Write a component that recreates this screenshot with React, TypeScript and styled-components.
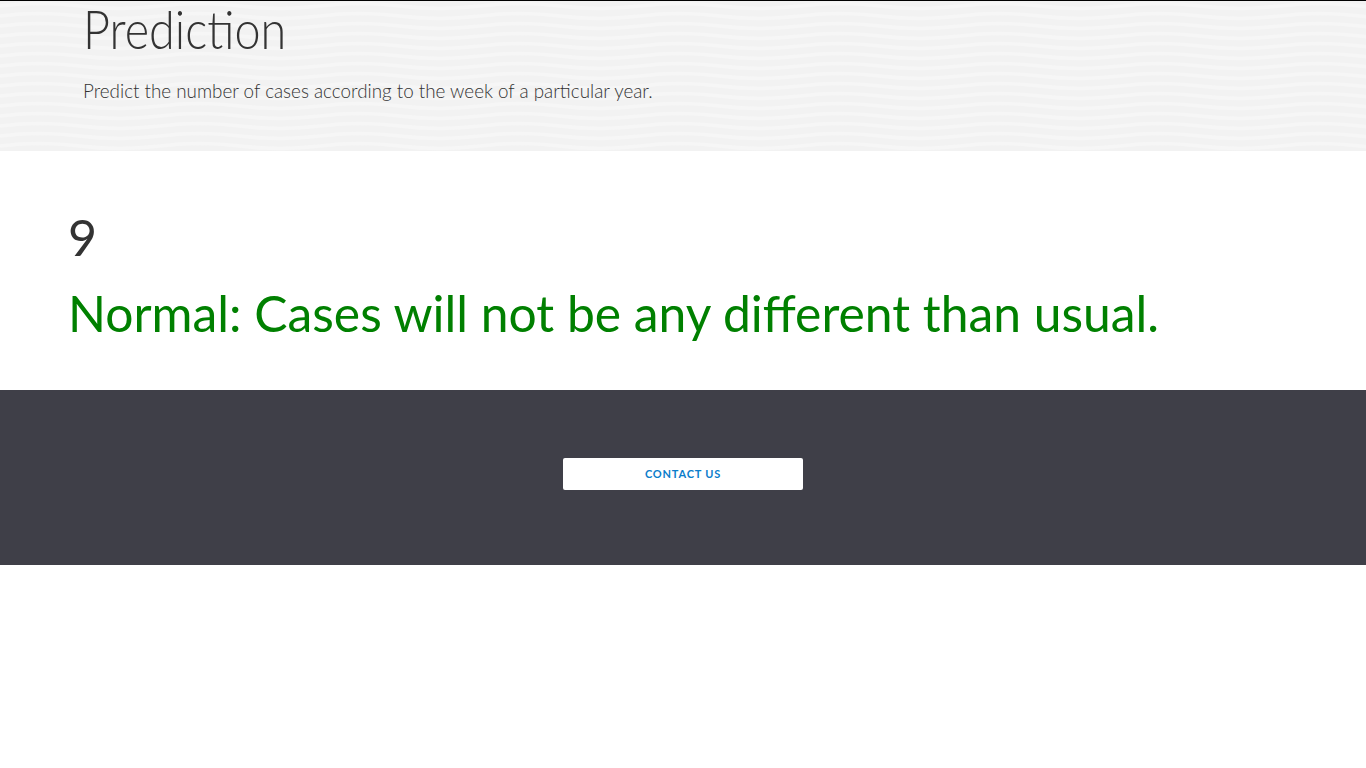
import React from "react";
import styled, { createGlobalStyle } from "styled-components";

const Global = createGlobalStyle`
  html, body { margin: 0; padding: 0; background: #fff; }
  body { font-family: Lato, "Liberation Sans", sans-serif; }
  * { box-sizing: border-box; }
`;

const wave = encodeURIComponent(
  `<svg xmlns='http://www.w3.org/2000/svg' width='160' height='10' viewBox='0 0 160 10'><path d='M0 5 Q40 0 80 5 T160 5' fill='none' stroke='#f9f9f9' stroke-width='3.5' stroke-opacity='0.7'/></svg>`
);

const Page = styled.div`
  display: flex;
  flex-direction: column;
  border-top: 1px solid #000;
`;

const Header = styled.header`
  height: 150px;
  background-color: #f2f2f2;
  background-image: url("data:image/svg+xml,${wave}");
  background-repeat: repeat;
  padding: 0 0 0 83px;
  display: flex;
  flex-direction: column;
`;

const Title = styled.h1`
  margin: 0;
  font-family: Lato, sans-serif;
  font-weight: 300;
  font-size: 53px;
  line-height: 56px;
  color: #333;
  transform: scaleX(0.882);
  transform-origin: left center;
  white-space: nowrap;
`;

const Subtitle = styled.p`
  margin: 22px 0 0;
  font-family: Lato, sans-serif;
  font-weight: 300;
  font-size: 19px;
  line-height: 24px;
  color: #333;
  transform: scaleX(0.99);
  transform-origin: left center;
  white-space: nowrap;
`;

const Main = styled.main`
  height: 239px;
  padding: 56px 0 0 68px;
  display: flex;
  flex-direction: column;
`;

const Number = styled.div`
  font-family: Lato, sans-serif;
  font-size: 50px;
  line-height: 60px;
  color: #333;
`;

const Verdict = styled.div`
  margin-top: 16px;
  font-family: Lato, sans-serif;
  font-size: 49.8px;
  line-height: 60px;
  color: #008000;
  white-space: nowrap;
`;

const Footer = styled.footer`
  height: 175px;
  background: #3f3f48;
  display: flex;
  justify-content: center;
  padding: 68px 0 0 0;
`;

const ContactButton = styled.a`
  width: 240px;
  height: 32px;
  background: #fff;
  border-radius: 2px;
  display: flex;
  align-items: center;
  justify-content: center;
  padding-bottom: 1px;
  font-family: Lato, sans-serif;
  font-weight: 700;
  font-size: 11px;
  letter-spacing: 0.8px;
  color: #0b7dcb;
  text-decoration: none;
  text-transform: uppercase;
`;

export default function App() {
  return (
    <>
      <Global />
      <Page>
        <Header>
          <Title>Prediction</Title>
          <Subtitle>Predict the number of cases according to the week of a particular year.</Subtitle>
        </Header>
        <Main>
          <Number>9</Number>
          <Verdict>Normal: Cases will not be any different than usual.</Verdict>
        </Main>
        <Footer>
          <ContactButton href="#">Contact us</ContactButton>
        </Footer>
      </Page>
    </>
  );
}
